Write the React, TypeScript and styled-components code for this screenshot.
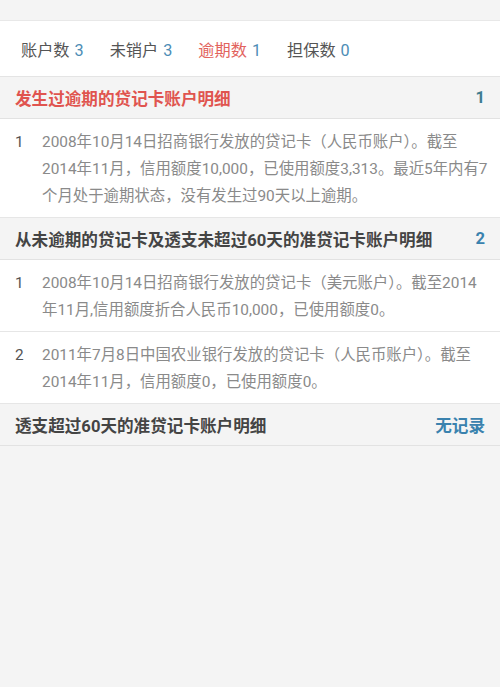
import React from 'react';
import styled, { createGlobalStyle } from 'styled-components';

const GlobalStyle = createGlobalStyle`
  html, body {
    margin: 0;
    padding: 0;
    background: #f4f4f4;
  }
  body {
    font-family: Roboto, "Noto Sans CJK SC", "Noto Sans", sans-serif;
    -webkit-font-smoothing: antialiased;
  }
`;

interface Tab {
  label: string;
  count: number;
  alert?: boolean;
}

interface Record {
  text: string;
}

interface Section {
  title: string;
  alert?: boolean;
  badge: string;
  badgeTone: 'teal' | 'blue';
  records: Record[];
}

const tabs: Tab[] = [
  { label: '账户数', count: 3 },
  { label: '未销户', count: 3 },
  { label: '逾期数', count: 1, alert: true },
  { label: '担保数', count: 0 },
];

const sections: Section[] = [
  {
    title: '发生过逾期的贷记卡账户明细',
    alert: true,
    badge: '1',
    badgeTone: 'teal',
    records: [
      {
        text: '2008年10月14日招商银行发放的贷记卡（人民币账户）。截至2014年11月，信用额度10,000，已使用额度3,313。最近5年内有7个月处于逾期状态，没有发生过90天以上逾期。',
      },
    ],
  },
  {
    title: '从未逾期的贷记卡及透支未超过60天的准贷记卡账户明细',
    badge: '2',
    badgeTone: 'blue',
    records: [
      { text: '2008年10月14日招商银行发放的贷记卡（美元账户）。截至2014年11月,信用额度折合人民币10,000，已使用额度0。' },
      { text: '2011年7月8日中国农业银行发放的贷记卡（人民币账户）。截至2014年11月，信用额度0，已使用额度0。' },
    ],
  },
  {
    title: '透支超过60天的准贷记卡账户明细',
    badge: '无记录',
    badgeTone: 'blue',
    records: [],
  },
];

const Page = styled.div`
  min-height: 687px;
  padding-top: 20px;
  background: #f4f4f4;
`;

const TabBar = styled.div`
  display: flex;
  align-items: center;
  height: 57px;
  padding: 0 21px;
  background: #fff;
  border-top: 1px solid #e8e8e8;
  border-bottom: 1px solid #e4e4e4;
  box-sizing: border-box;
`;

const TabItem = styled.div<{ $alert?: boolean }>`
  margin-right: 26px;
  font-size: 16.2px;
  color: ${p => (p.$alert ? '#e2635d' : '#555')};
  white-space: nowrap;
`;

const TabCount = styled.span`
  margin-left: 5px;
  color: #4d8db6;
`;

const SectionHeader = styled.div`
  display: flex;
  align-items: center;
  justify-content: space-between;
  height: 42px;
  padding: 0 15px;
  background: #f4f4f4;
  border-bottom: 1px solid #e2e2e2;
  box-sizing: border-box;
`;

const SectionTitle = styled.div<{ $alert?: boolean }>`
  font-size: 16.6px;
  font-weight: 700;
  color: ${p => (p.$alert ? '#e0544f' : '#444')};
`;

const Badge = styled.div<{ $tone: 'teal' | 'blue' }>`
  font-size: 16.6px;
  font-weight: 700;
  color: ${p => (p.$tone === 'teal' ? '#3e7d90' : '#3a82ae')};
`;

const RecordRow = styled.div`
  display: flex;
  padding: 10px 12px 7px 15px;
  background: #fff;
  border-bottom: 1px solid #e6e6e6;
`;

const RecordIndex = styled.div`
  width: 27px;
  flex-shrink: 0;
  font-size: 15.4px;
  line-height: 27px;
  color: #555;
`;

const RecordText = styled.div`
  flex: 1;
  font-size: 15.4px;
  line-height: 27px;
  color: #8a8a8a;
`;

export default function App() {
  return (
    <>
      <GlobalStyle />
      <Page>
        <TabBar>
          {tabs.map(tab => (
            <TabItem key={tab.label} $alert={tab.alert}>
              {tab.label}
              <TabCount>{tab.count}</TabCount>
            </TabItem>
          ))}
        </TabBar>

        {sections.map(section => (
          <React.Fragment key={section.title}>
            <SectionHeader>
              <SectionTitle $alert={section.alert}>{section.title}</SectionTitle>
              <Badge $tone={section.badgeTone}>{section.badge}</Badge>
            </SectionHeader>
            {section.records.map((record, i) => (
              <RecordRow key={i}>
                <RecordIndex>{i + 1}</RecordIndex>
                <RecordText>{record.text}</RecordText>
              </RecordRow>
            ))}
          </React.Fragment>
        ))}
      </Page>
    </>
  );
}
